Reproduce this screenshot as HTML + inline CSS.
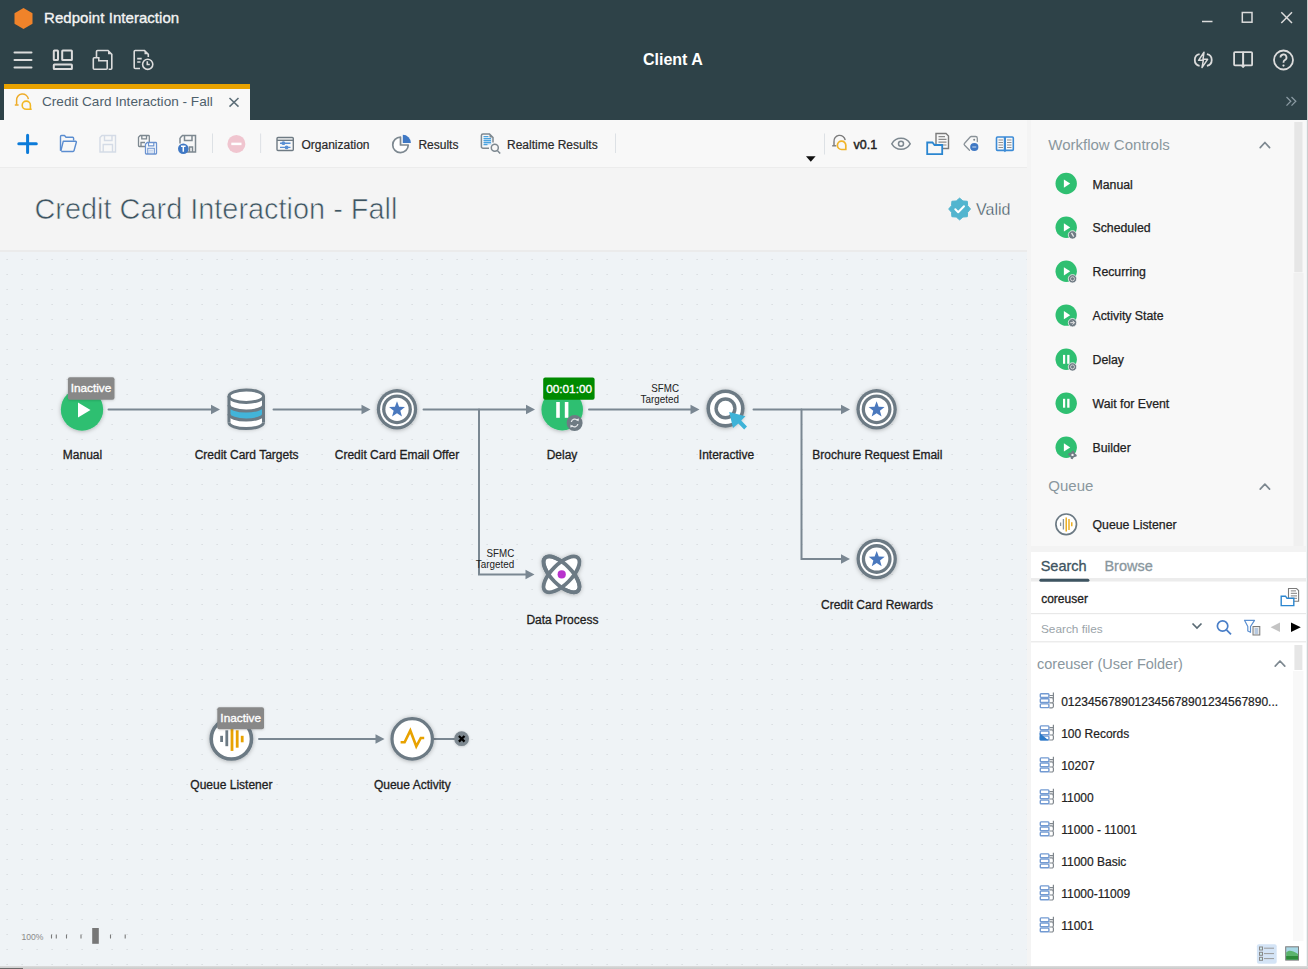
<!DOCTYPE html>
<html><head><meta charset="utf-8">
<style>
*{box-sizing:border-box;margin:0;padding:0}
html,body{width:1308px;height:969px;overflow:hidden;background:#eff3f6;font-family:"Liberation Sans",sans-serif}
.a{position:absolute}
.t{position:absolute;white-space:nowrap;line-height:1}
#hdr{left:0;top:0;width:1308px;height:120px;background:#2e4248}
#tab{left:4px;top:84px;width:246px;height:36px;background:#f8f8f8;border-top:5px solid #e8a200}
#tb{left:0;top:120px;width:1027px;height:48px;background:#f8f8f8;border-bottom:1px solid #ececec}
#ttl{left:0;top:168px;width:1027px;height:84px;background:#f4f4f4;border-bottom:2px solid #ebebeb}
#cv{left:0;top:252px;width:1027px;height:714px;background-color:#eff3f6}
#split{left:1027px;top:120px;width:4px;height:849px;background:#f4f4f4}
#rp{left:1031px;top:120px;width:275px;height:432px;background:#f8f8f8}
#rp2{left:1031px;top:552px;width:275px;height:414px;background:#fff}
#rborder{left:1306.6px;top:0;width:1.4px;height:969px;background:#cdcdcd}
#bborder{left:0;top:966px;width:1308px;height:3px;background:linear-gradient(#dcdcdc,#c8c8c8)}
#bthumb{left:0;top:968px;width:23.4px;height:1px;background:#6a6a6a}
</style></head>
<body>
<div id="hdr" class="a"></div>
<div id="tab" class="a"></div>
<div id="tb" class="a"></div>
<div id="ttl" class="a"></div>
<div id="cv" class="a"></div>

<!-- CANVAS -->
<svg class="a" style="left:0;top:0" width="1027" height="966">
 <defs>
  <pattern id="dots" x="0" y="0" width="15" height="15" patternUnits="userSpaceOnUse">
   <rect x="6.5" y="4" width="1.2" height="1" fill="#d2d7db"/>
  </pattern>
  <filter id="sh" x="-30%" y="-30%" width="160%" height="160%">
   <feDropShadow dx="0" dy="0.6" stdDeviation="2.3" flood-color="#000" flood-opacity="0.3"/>
  </filter>
  <filter id="sh2" x="-30%" y="-30%" width="160%" height="160%">
   <feDropShadow dx="0" dy="0.5" stdDeviation="1.2" flood-color="#000" flood-opacity="0.2"/>
  </filter>
 </defs>
 <rect x="0" y="252" width="1027" height="714" fill="url(#dots)"/>

 <!-- connectors -->
 <g stroke="#7a8792" stroke-width="2" fill="none" stroke-linecap="round">
  <path d="M108.5,409.5H212"/>
  <path d="M273.5,409.5H362"/>
  <path d="M423.5,409.5H527"/>
  <path d="M479,409.5V574.5H526"/>
  <path d="M589,409.5H691"/>
  <path d="M753.5,409.5H842"/>
  <path d="M801.5,409.5V559H842"/>
  <path d="M259,739H376"/>
  <path d="M434,739H455"/>
 </g>
 <path d="M211,404.8L220,409.5L211,414.2Z" fill="#7a8792"/><path d="M361.5,404.8L370.5,409.5L361.5,414.2Z" fill="#7a8792"/><path d="M526,404.8L535,409.5L526,414.2Z" fill="#7a8792"/><path d="M525.5,569.8L534.5,574.5L525.5,579.2Z" fill="#7a8792"/><path d="M690.5,404.8L699.5,409.5L690.5,414.2Z" fill="#7a8792"/><path d="M841,404.8L850,409.5L841,414.2Z" fill="#7a8792"/><path d="M841,554.3L850,559L841,563.7Z" fill="#7a8792"/><path d="M375.5,734.3L384.5,739L375.5,743.7Z" fill="#7a8792"/>
 <!-- Manual -->
 <g filter="url(#sh)"><circle cx="82" cy="409.5" r="21.2" fill="#2fbf71"/></g>
 <path d="M78,402.5V417.5L90.5,410Z" fill="#fff"/>
 <!-- Database -->
 <g filter="url(#sh)">
  <path d="M229,396A17.25,6.4 0 0 1 263.5,396V422.5A17.25,6.3 0 0 1 229,422.5Z" fill="#fff"/>
 </g>
 <path d="M229,405A17.25,6 0 0 0 263.5,405V414A17.25,6 0 0 1 229,414Z" fill="#42b4d9"/>
 <g stroke="#6c7a84" stroke-width="3" fill="none">
  <ellipse cx="246.25" cy="396.2" rx="17.25" ry="6.2"/>
  <path d="M229,396V422.5M263.5,396V422.5"/>
  <path d="M229,405A17.25,6 0 0 0 263.5,405"/>
  <path d="M229,414A17.25,6 0 0 0 263.5,414"/>
  <path d="M229,422.5A17.25,6.1 0 0 0 263.5,422.5"/>
 </g>
 <!-- Email offer -->
 <g filter="url(#sh)"><circle cx="397" cy="409.3" r="20.2" fill="#6c7a84"/></g>
 <circle cx="397" cy="409.3" r="16.9" fill="#fff"/>
 <circle cx="397" cy="409.3" r="14.9" fill="#6c7a84"/>
 <circle cx="397" cy="409.3" r="11.6" fill="#fff"/>
 <path d="M397.00,401.30L399.06,406.87L404.99,407.10L400.33,410.78L401.94,416.50L397.00,413.20L392.06,416.50L393.67,410.78L389.01,407.10L394.94,406.87Z" fill="#4a78bd"/>
 <!-- Delay -->
 <g filter="url(#sh)"><circle cx="562.2" cy="409.6" r="20.8" fill="#2fbf71"/></g>
 <rect x="556.2" y="402" width="3.6" height="15.8" fill="#fff"/>
 <rect x="564.8" y="402" width="3.6" height="15.8" fill="#fff"/>
 <circle cx="574.6" cy="423" r="8" fill="#6f7b84" stroke="#eff3f6" stroke-width="0"/>
 <g fill="none" stroke="#e6e9ec" stroke-width="1.3">
  <path d="M571.3,422A3.5,3.5 0 0 1 577.6,420.6"/>
  <path d="M577.9,424A3.5,3.5 0 0 1 571.6,425.4"/>
 </g>
 <path d="M576.2,419.2L578.6,421.6L578.9,418.6Z M573,426.8L570.6,424.4L570.3,427.4Z" fill="#e6e9ec"/>
 <rect x="543.2" y="377.6" width="51.4" height="22.2" rx="2" fill="#008a00"/>
 <text x="569.1" y="392.5" font-family="Liberation Sans" font-size="11.8" fill="#fff" stroke="#fff" stroke-width="0.35" text-anchor="middle">00:01:00</text>
 <!-- Interactive -->
 <g filter="url(#sh)"><circle cx="725.5" cy="408.6" r="19.1" fill="#6c7a84"/></g>
 <circle cx="725.5" cy="408.6" r="15.5" fill="#fff"/>
 <circle cx="725.5" cy="408.4" r="11.1" fill="#6c7a84"/>
 <circle cx="725.5" cy="408.4" r="7.7" fill="#fff"/>
 <path d="M729.2,412.1L745.4,416.2L741.2,420.6L747,426.6L744.2,429.4L738.3,423.5L733,428.1Z" fill="#3fb3d8"/>
 <!-- Brochure -->
 <g filter="url(#sh)"><circle cx="876.6" cy="409.3" r="20.2" fill="#6c7a84"/></g>
 <circle cx="876.6" cy="409.3" r="16.9" fill="#fff"/>
 <circle cx="876.6" cy="409.3" r="14.9" fill="#6c7a84"/>
 <circle cx="876.6" cy="409.3" r="11.6" fill="#fff"/>
 <path d="M876.60,401.30L878.66,406.87L884.59,407.10L879.93,410.78L881.54,416.50L876.60,413.20L871.66,416.50L873.27,410.78L868.61,407.10L874.54,406.87Z" fill="#4a78bd"/>
 <!-- Rewards -->
 <g filter="url(#sh)"><circle cx="876.7" cy="559" r="20.2" fill="#6c7a84"/></g>
 <circle cx="876.7" cy="559" r="16.9" fill="#fff"/>
 <circle cx="876.7" cy="559" r="14.9" fill="#6c7a84"/>
 <circle cx="876.7" cy="559" r="11.6" fill="#fff"/>
 <path d="M876.70,551.00L878.76,556.57L884.69,556.80L880.03,560.48L881.64,566.20L876.70,562.90L871.76,566.20L873.37,560.48L868.71,556.80L874.64,556.57Z" fill="#4a78bd"/>
 <!-- Data process -->
 <g filter="url(#sh)">
  <g fill="#fff" stroke="#6c7a84" stroke-width="3.8">
   <ellipse cx="561.5" cy="574.4" rx="23.3" ry="10" transform="rotate(45 561.5 574.4)"/>
   <ellipse cx="561.5" cy="574.4" rx="23.3" ry="10" transform="rotate(-45 561.5 574.4)"/>
  </g>
 </g>
 <ellipse cx="561.5" cy="574.4" rx="23.3" ry="10" transform="rotate(45 561.5 574.4)" fill="none" stroke="#6c7a84" stroke-width="3.8"/>
 <circle cx="561.7" cy="574.4" r="4.1" fill="#b833cc"/>
 <!-- Queue listener -->
 <g filter="url(#sh)"><circle cx="231.35" cy="738.9" r="20.15" fill="#fff" stroke="#6c7a84" stroke-width="3.6"/></g>
 <g stroke-width="2.8">
  <path d="M221.6,735.8V742" stroke="#6c7a84"/>
  <path d="M226.8,730.3V746.2" stroke="#6c7a84"/>
  <path d="M232,728V750.9" stroke="#e8a200"/>
  <path d="M237.2,730.3V747.7" stroke="#e8a200"/>
  <path d="M242.2,735.8V742.3" stroke="#e8a200"/>
 </g>
 <!-- Queue activity -->
 <g filter="url(#sh)"><circle cx="412.2" cy="738.9" r="20.2" fill="#fff" stroke="#6c7a84" stroke-width="3.2"/></g>
 <path d="M400.6,742.3H404.6L410.3,730.6L416.3,746.3L420.8,738H424.2" fill="none" stroke="#e8a200" stroke-width="2.6" stroke-linejoin="miter" stroke-linecap="butt"/>
 <g filter="url(#sh2)"><circle cx="461.6" cy="738.7" r="7.4" fill="#7d8890"/></g>
 <path d="M458.9,736L464.5,741.6M464.5,736L458.9,741.6" stroke="#000" stroke-width="2.3"/>
 <!-- inactive labels -->
 <g filter="url(#sh2)"><rect x="67.9" y="377.3" width="46.6" height="22.4" rx="2" fill="#888"/></g>
 <text x="91" y="392.3" font-family="Liberation Sans" font-size="11.8" fill="#fff" stroke="#fff" stroke-width="0.35" text-anchor="middle">Inactive</text>
 <g filter="url(#sh2)"><rect x="217.3" y="707.2" width="46.7" height="22.1" rx="2" fill="#888"/></g>
 <text x="240.7" y="722" font-family="Liberation Sans" font-size="11.8" fill="#fff" stroke="#fff" stroke-width="0.35" text-anchor="middle">Inactive</text>
 <!-- edge labels -->
 <g font-family="Liberation Sans" font-size="10.6" fill="#222">
  <text x="651.3" y="391.8" textLength="27.7" lengthAdjust="spacingAndGlyphs">SFMC</text><text x="640.5" y="403" textLength="38.5" lengthAdjust="spacingAndGlyphs">Targeted</text>
  <text x="486.6" y="556.8" textLength="27.7" lengthAdjust="spacingAndGlyphs">SFMC</text><text x="475.8" y="568" textLength="38.5" lengthAdjust="spacingAndGlyphs">Targeted</text>
 </g>
 <!-- node labels -->
 <g font-family="Liberation Sans" font-size="12" fill="#1e1e1e" stroke="#1e1e1e" stroke-width="0.3" text-anchor="middle">
  <text x="82.5" y="458.8">Manual</text>
  <text x="246.6" y="458.8">Credit Card Targets</text>
  <text x="397" y="458.8">Credit Card Email Offer</text>
  <text x="562" y="458.8">Delay</text>
  <text x="726.5" y="458.8">Interactive</text>
  <text x="877.4" y="458.8">Brochure Request Email</text>
  <text x="562.4" y="623.8">Data Process</text>
  <text x="877" y="608.8">Credit Card Rewards</text>
  <text x="231.4" y="788.8">Queue Listener</text>
  <text x="412.3" y="788.8">Queue Activity</text>
 </g>
 <!-- zoom control -->
 <text x="21.4" y="940" font-family="Liberation Sans" font-size="8.6" fill="#8a8a8a">100%</text>
 <g stroke="#7a7a7a" stroke-width="1.1">
  <path d="M51.5,934.5V938.5M56.3,934.5V938.5M66.5,934.5V938.5M81,934.5V938.5M110.5,934.5V938.5M125.2,934.5V938.5"/>
 </g>
 <rect x="92.2" y="928" width="6.6" height="15.8" fill="#777"/>
</svg>
<div id="split" class="a"></div>
<div id="rp" class="a"></div>
<div id="rp2" class="a"></div>
<div id="rborder" class="a"></div>
<!-- RIGHT PANEL -->
<svg class="a" style="left:0;top:0" width="1308" height="969">
 <circle cx="1066.2" cy="183.5" r="10.7" fill="#2fbf71"/><path d="M1063.9,179.5V187.7L1070.2,183.6Z" fill="#fff"/>
 <circle cx="1066.2" cy="227.3" r="10.7" fill="#2fbf71"/><path d="M1063.9,223.3V231.5L1070.2,227.4Z" fill="#fff"/><circle cx="1072.5" cy="234.9" r="4.2" fill="#6f7b84" stroke="#f8f8f8" stroke-width="0.8"/><path d="M1071.5,232.9L1073.7,236.70000000000002" stroke="#e8e8e8" stroke-width="1.3"/>
 <circle cx="1066.2" cy="271.2" r="10.7" fill="#2fbf71"/><path d="M1063.9,267.2V275.4L1070.2,271.3Z" fill="#fff"/><circle cx="1072.5" cy="278.8" r="4.2" fill="#6f7b84" stroke="#f8f8f8" stroke-width="0.8"/><circle cx="1072.5" cy="278.8" r="2" fill="none" stroke="#d8d8d8" stroke-width="0.9"/>
 <circle cx="1066.2" cy="315.1" r="10.7" fill="#2fbf71"/><path d="M1063.9,311.1V319.3L1070.2,315.20000000000005Z" fill="#fff"/><circle cx="1072.5" cy="322.70000000000005" r="4.2" fill="#6f7b84" stroke="#f8f8f8" stroke-width="0.8"/><path d="M1070.3,322.70000000000005H1074.5M1072.5,320.70000000000005L1074.5,322.70000000000005L1072.5,324.70000000000005" fill="none" stroke="#e8e8e8" stroke-width="1"/>
 <circle cx="1066.2" cy="359.3" r="10.7" fill="#2fbf71"/><rect x="1063.0" y="354.9" width="2.2" height="8.9" fill="#fff"/><rect x="1067.2" y="354.9" width="2.3" height="8.9" fill="#fff"/><circle cx="1072.5" cy="366.90000000000003" r="4.2" fill="#6f7b84" stroke="#f8f8f8" stroke-width="0.8"/><circle cx="1072.5" cy="366.90000000000003" r="2" fill="none" stroke="#d8d8d8" stroke-width="0.9"/>
 <circle cx="1066.2" cy="403.2" r="10.7" fill="#2fbf71"/><rect x="1063.0" y="398.8" width="2.2" height="8.9" fill="#fff"/><rect x="1067.2" y="398.8" width="2.3" height="8.9" fill="#fff"/>
 <circle cx="1066.2" cy="447.3" r="10.7" fill="#2fbf71"/><path d="M1063.9,443.3V451.5L1070.2,447.40000000000003Z" fill="#fff"/><path d="M1076.80,454.90L1076.47,456.55L1074.55,456.95L1073.61,457.58L1072.50,459.20L1070.85,458.87L1070.45,456.95L1069.82,456.01L1068.20,454.90L1068.53,453.25L1070.45,452.85L1071.39,452.22L1072.50,450.60L1074.15,450.93L1074.55,452.85L1075.18,453.79Z" fill="#6f7b84"/><circle cx="1072.5" cy="454.90000000000003" r="1.2" fill="#f0f0f0"/>

 <g fill="none" stroke="#7d8890" stroke-width="1.7" stroke-linecap="round" stroke-linejoin="round">
  <path d="M1260.2,147.6L1264.9,142.5L1269.6,147.6"/>
  <path d="M1260.2,489.2L1264.9,484.1L1269.6,489.2"/>
  <path d="M1275.2,666.2L1280,661L1284.8,666.2"/>
 </g>
 <rect x="1294.3" y="122" width="8.2" height="150.2" fill="#e6e6e6"/>
 <rect x="1293.5" y="273" width="10" height="273" fill="#f0f0f0"/>
 <rect x="1031" y="546" width="275" height="6" fill="#f3f3f3"/>
 <!-- queue listener small -->
 <circle cx="1066.2" cy="524.3" r="10.3" fill="#fff" stroke="#6c7a84" stroke-width="1.7"/>
 <g stroke-width="1.3">
  <path d="M1060.6,522.5V526" stroke="#8a959d"/><path d="M1063.4,519V529.5" stroke="#8a959d"/>
  <path d="M1066.2,517.5V531.5" stroke="#e8a200"/><path d="M1069,519V530" stroke="#e8a200"/><path d="M1071.8,522.3V526.3" stroke="#e8a200"/>
 </g>
 <!-- search tabs -->
 <rect x="1031" y="578" width="275" height="3.5" fill="#ececec"/>
 <rect x="1039.4" y="578.8" width="50" height="3" rx="1.5" fill="#3e5461"/>
 <rect x="1031" y="613" width="275" height="1.2" fill="#e8e8e8"/>
 <rect x="1031" y="641.2" width="275" height="1.2" fill="#e8e8e8"/>
 <!-- folder doc icon -->
 <g fill="none" stroke="#7b7b7b" stroke-width="1.1">
  <path d="M1288.5,599V588.5H1296.5L1298.6,590.6V601.2H1294"/>
 </g>
 <path d="M1290.8,590.9H1296M1290.8,593.4H1297M1290.8,595.9H1297M1290.8,598.4H1297" stroke="#999" stroke-width="1.1"/>
 <path d="M1281.2,605.6V596.2H1285.5L1287,598.2H1293.8V605.6Z" fill="#fff" stroke="#2b86d0" stroke-width="1.4"/>
 <!-- search row icons -->
 <path d="M1192.5,623.5L1197,628L1201.5,623.5" fill="none" stroke="#5a6b75" stroke-width="1.7"/>
 <g fill="none" stroke="#4a7fc8" stroke-width="1.7">
  <circle cx="1222.6" cy="626" r="5.2"/>
  <path d="M1226.5,629.8L1231,634.3"/>
 </g>
 <path d="M1244.5,620.3H1254.5L1250.5,626.5V632.3L1247.8,631V626.5Z" fill="none" stroke="#5b8fd0" stroke-width="1.2" stroke-linejoin="round"/>
 <rect x="1253" y="626.5" width="6.8" height="8.5" fill="#e8e8e8" stroke="#7b7b7b" stroke-width="1"/>
 <path d="M1254.8,629H1258M1254.8,631H1258M1254.8,633H1258" stroke="#5b8fd0" stroke-width="0.7"/>
 <path d="M1280,622.5V632L1270.6,627.2Z" fill="#c4c4c4"/>
 <path d="M1291,622.5V632L1300.8,627.2Z" fill="#000"/>
 <!-- list scrollbar -->
 <rect x="1294.4" y="645" width="8" height="25" fill="#e6e6e6"/>
 <rect x="1293" y="671" width="10.4" height="270" fill="#f8f8f8"/>
 <!-- bottom buttons -->
 <rect x="1256.9" y="944.2" width="19.8" height="19.5" rx="2" fill="#d4e4f6"/>
 <g fill="#cfe8ee" stroke="#888" stroke-width="1">
  <rect x="1259.5" y="947" width="3" height="3"/><rect x="1259.5" y="952.3" width="3" height="3"/><rect x="1259.5" y="957.3" width="3" height="3"/>
 </g>
 <path d="M1264,948.2H1274M1264,953.6H1274M1264,958.6H1274" stroke="#9a9a9a" stroke-width="1"/>
 <rect x="1285.7" y="946.8" width="12.8" height="13.3" fill="#a8d8e6" stroke="#7b7b7b" stroke-width="1"/>
 <path d="M1286.2,952.5C1289,949.6 1292,950.5 1298,954V959.6H1286.2Z" fill="#5cb46d"/>
 <rect x="1286.2" y="956" width="11.8" height="3.6" fill="#2e8b3a"/>
 <path d="M1049.3,695.5H1053.4M1053.4,692.5V699.9" fill="none" stroke="#80878d" stroke-width="1.2"/>
 <path d="M1049.3,697.6H1051.9A1.5,1.5 0 0 1 1053.4,699.1V701.3A1.5,1.5 0 0 1 1051.9,702.8H1049.3M1051.9,702.8A1.5,1.5 0 0 1 1053.4,704.3V706.3A1.5,1.5 0 0 1 1051.9,707.8H1049.3" fill="none" stroke="#80878d" stroke-width="1.2"/>
 <rect x="1040.3" y="693.7" width="8.6" height="3.7" rx="0.8" fill="#fff" stroke="#729ad2" stroke-width="1.4"/>
 <rect x="1040.3" y="698.8" width="8.6" height="3.7" rx="0.8" fill="#fff" stroke="#729ad2" stroke-width="1.4"/>
 <rect x="1040.3" y="703.9" width="8.6" height="3.7" rx="0.8" fill="#fff" stroke="#729ad2" stroke-width="1.4"/>
 <path d="M1049.3,727.7H1053.4M1053.4,724.7V732.1" fill="none" stroke="#80878d" stroke-width="1.2"/>
 <path d="M1049.3,729.8H1051.9A1.5,1.5 0 0 1 1053.4,731.3V733.5A1.5,1.5 0 0 1 1051.9,735.0H1049.3M1051.9,735.0A1.5,1.5 0 0 1 1053.4,736.5V738.5A1.5,1.5 0 0 1 1051.9,740.0H1049.3" fill="none" stroke="#80878d" stroke-width="1.2"/>
 <rect x="1040.3" y="725.9" width="8.6" height="3.7" rx="0.8" fill="#fff" stroke="#729ad2" stroke-width="1.4"/>
 <rect x="1040.3" y="731.0" width="8.6" height="3.7" rx="0.8" fill="#fff" stroke="#729ad2" stroke-width="1.4"/>
 <rect x="1040.3" y="736.1" width="8.6" height="3.7" rx="0.8" fill="#fff" stroke="#729ad2" stroke-width="1.4"/>
 <path d="M1039.6,732.9L1048.7,740.4H1040.8A1.2,1.2 0 0 1 1039.6,739.2Z" fill="#2b7ac9"/>
 <path d="M1049.3,759.7H1053.4M1053.4,756.7V764.1" fill="none" stroke="#80878d" stroke-width="1.2"/>
 <path d="M1049.3,761.8H1051.9A1.5,1.5 0 0 1 1053.4,763.3V765.5A1.5,1.5 0 0 1 1051.9,767.0H1049.3M1051.9,767.0A1.5,1.5 0 0 1 1053.4,768.5V770.5A1.5,1.5 0 0 1 1051.9,772.0H1049.3" fill="none" stroke="#80878d" stroke-width="1.2"/>
 <rect x="1040.3" y="757.9" width="8.6" height="3.7" rx="0.8" fill="#fff" stroke="#729ad2" stroke-width="1.4"/>
 <rect x="1040.3" y="763.0" width="8.6" height="3.7" rx="0.8" fill="#fff" stroke="#729ad2" stroke-width="1.4"/>
 <rect x="1040.3" y="768.1" width="8.6" height="3.7" rx="0.8" fill="#fff" stroke="#729ad2" stroke-width="1.4"/>
 <path d="M1049.3,791.7H1053.4M1053.4,788.7V796.1" fill="none" stroke="#80878d" stroke-width="1.2"/>
 <path d="M1049.3,793.8H1051.9A1.5,1.5 0 0 1 1053.4,795.3V797.5A1.5,1.5 0 0 1 1051.9,799.0H1049.3M1051.9,799.0A1.5,1.5 0 0 1 1053.4,800.5V802.5A1.5,1.5 0 0 1 1051.9,804.0H1049.3" fill="none" stroke="#80878d" stroke-width="1.2"/>
 <rect x="1040.3" y="789.9" width="8.6" height="3.7" rx="0.8" fill="#fff" stroke="#729ad2" stroke-width="1.4"/>
 <rect x="1040.3" y="795.0" width="8.6" height="3.7" rx="0.8" fill="#fff" stroke="#729ad2" stroke-width="1.4"/>
 <rect x="1040.3" y="800.1" width="8.6" height="3.7" rx="0.8" fill="#fff" stroke="#729ad2" stroke-width="1.4"/>
 <path d="M1049.3,823.7H1053.4M1053.4,820.7V828.1" fill="none" stroke="#80878d" stroke-width="1.2"/>
 <path d="M1049.3,825.8H1051.9A1.5,1.5 0 0 1 1053.4,827.3V829.5A1.5,1.5 0 0 1 1051.9,831.0H1049.3M1051.9,831.0A1.5,1.5 0 0 1 1053.4,832.5V834.5A1.5,1.5 0 0 1 1051.9,836.0H1049.3" fill="none" stroke="#80878d" stroke-width="1.2"/>
 <rect x="1040.3" y="821.9" width="8.6" height="3.7" rx="0.8" fill="#fff" stroke="#729ad2" stroke-width="1.4"/>
 <rect x="1040.3" y="827.0" width="8.6" height="3.7" rx="0.8" fill="#fff" stroke="#729ad2" stroke-width="1.4"/>
 <rect x="1040.3" y="832.1" width="8.6" height="3.7" rx="0.8" fill="#fff" stroke="#729ad2" stroke-width="1.4"/>
 <path d="M1049.3,855.7H1053.4M1053.4,852.7V860.1" fill="none" stroke="#80878d" stroke-width="1.2"/>
 <path d="M1049.3,857.8H1051.9A1.5,1.5 0 0 1 1053.4,859.3V861.5A1.5,1.5 0 0 1 1051.9,863.0H1049.3M1051.9,863.0A1.5,1.5 0 0 1 1053.4,864.5V866.5A1.5,1.5 0 0 1 1051.9,868.0H1049.3" fill="none" stroke="#80878d" stroke-width="1.2"/>
 <rect x="1040.3" y="853.9" width="8.6" height="3.7" rx="0.8" fill="#fff" stroke="#729ad2" stroke-width="1.4"/>
 <rect x="1040.3" y="859.0" width="8.6" height="3.7" rx="0.8" fill="#fff" stroke="#729ad2" stroke-width="1.4"/>
 <rect x="1040.3" y="864.1" width="8.6" height="3.7" rx="0.8" fill="#fff" stroke="#729ad2" stroke-width="1.4"/>
 <path d="M1049.3,887.7H1053.4M1053.4,884.7V892.1" fill="none" stroke="#80878d" stroke-width="1.2"/>
 <path d="M1049.3,889.8H1051.9A1.5,1.5 0 0 1 1053.4,891.3V893.5A1.5,1.5 0 0 1 1051.9,895.0H1049.3M1051.9,895.0A1.5,1.5 0 0 1 1053.4,896.5V898.5A1.5,1.5 0 0 1 1051.9,900.0H1049.3" fill="none" stroke="#80878d" stroke-width="1.2"/>
 <rect x="1040.3" y="885.9" width="8.6" height="3.7" rx="0.8" fill="#fff" stroke="#729ad2" stroke-width="1.4"/>
 <rect x="1040.3" y="891.0" width="8.6" height="3.7" rx="0.8" fill="#fff" stroke="#729ad2" stroke-width="1.4"/>
 <rect x="1040.3" y="896.1" width="8.6" height="3.7" rx="0.8" fill="#fff" stroke="#729ad2" stroke-width="1.4"/>
 <path d="M1049.3,919.7H1053.4M1053.4,916.7V924.1" fill="none" stroke="#80878d" stroke-width="1.2"/>
 <path d="M1049.3,921.8H1051.9A1.5,1.5 0 0 1 1053.4,923.3V925.5A1.5,1.5 0 0 1 1051.9,927.0H1049.3M1051.9,927.0A1.5,1.5 0 0 1 1053.4,928.5V930.5A1.5,1.5 0 0 1 1051.9,932.0H1049.3" fill="none" stroke="#80878d" stroke-width="1.2"/>
 <rect x="1040.3" y="917.9" width="8.6" height="3.7" rx="0.8" fill="#fff" stroke="#729ad2" stroke-width="1.4"/>
 <rect x="1040.3" y="923.0" width="8.6" height="3.7" rx="0.8" fill="#fff" stroke="#729ad2" stroke-width="1.4"/>
 <rect x="1040.3" y="928.1" width="8.6" height="3.7" rx="0.8" fill="#fff" stroke="#729ad2" stroke-width="1.4"/>
</svg>

<div class="t" style="left:1048.3px;top:136.5px;font-size:15px;color:#8a979e">Workflow Controls</div>
<div class="t" style="left:1092.5px;top:178.6px;font-size:12.3px;color:#222;-webkit-text-stroke:0.25px #222">Manual</div>
<div class="t" style="left:1092.5px;top:222.4px;font-size:12.3px;color:#222;-webkit-text-stroke:0.25px #222">Scheduled</div>
<div class="t" style="left:1092.5px;top:266.3px;font-size:12.3px;color:#222;-webkit-text-stroke:0.25px #222">Recurring</div>
<div class="t" style="left:1092.5px;top:310.2px;font-size:12.3px;color:#222;-webkit-text-stroke:0.25px #222">Activity State</div>
<div class="t" style="left:1092.5px;top:354.4px;font-size:12.3px;color:#222;-webkit-text-stroke:0.25px #222">Delay</div>
<div class="t" style="left:1092.5px;top:398.3px;font-size:12.3px;color:#222;-webkit-text-stroke:0.25px #222">Wait for Event</div>
<div class="t" style="left:1092.5px;top:442.4px;font-size:12.3px;color:#222;-webkit-text-stroke:0.25px #222">Builder</div>
<div class="t" style="left:1048.3px;top:478.2px;font-size:15px;color:#8a979e">Queue</div>
<div class="t" style="left:1092.5px;top:519.4px;font-size:12.3px;color:#222;-webkit-text-stroke:0.25px #222">Queue Listener</div>
<div class="t" style="left:1040.7px;top:559px;font-size:14.5px;color:#3e5461;-webkit-text-stroke:0.3px #3e5461">Search</div>
<div class="t" style="left:1104.4px;top:559px;font-size:14.5px;color:#8a979e;-webkit-text-stroke:0.3px #8a979e">Browse</div>
<div class="t" style="left:1041.2px;top:592.5px;font-size:12px;color:#222;-webkit-text-stroke:0.3px #222">coreuser</div>
<div class="t" style="left:1041px;top:624px;font-size:11.8px;color:#9aa3a9">Search files</div>
<div class="t" style="left:1037px;top:657.3px;font-size:14.5px;color:#8a979e">coreuser (User Folder)</div>
<div class="t" style="left:1061.2px;top:695.7px;font-size:12px;color:#222;-webkit-text-stroke:0.2px #222">0123456789012345678901234567890...</div>
<div class="t" style="left:1061.2px;top:727.7px;font-size:12px;color:#222;-webkit-text-stroke:0.2px #222">100 Records</div>
<div class="t" style="left:1061.2px;top:759.7px;font-size:12px;color:#222;-webkit-text-stroke:0.2px #222">10207</div>
<div class="t" style="left:1061.2px;top:791.7px;font-size:12px;color:#222;-webkit-text-stroke:0.2px #222">11000</div>
<div class="t" style="left:1061.2px;top:823.7px;font-size:12px;color:#222;-webkit-text-stroke:0.2px #222">11000 - 11001</div>
<div class="t" style="left:1061.2px;top:855.7px;font-size:12px;color:#222;-webkit-text-stroke:0.2px #222">11000 Basic</div>
<div class="t" style="left:1061.2px;top:887.7px;font-size:12px;color:#222;-webkit-text-stroke:0.2px #222">11000-11009</div>
<div class="t" style="left:1061.2px;top:919.7px;font-size:12px;color:#222;-webkit-text-stroke:0.2px #222">11001</div>

<!-- HEADER -->
<svg class="a" style="left:0;top:0" width="1308" height="120">
 <polygon points="23.5,8 32.5,13.2 32.5,23.8 23.5,29 14.5,23.8 14.5,13.2" fill="#f0832a"/>
 <g stroke="#dcdcdc" stroke-width="2" fill="none" stroke-linecap="round">
  <path d="M14.5,52.5H31.5M14.5,60H31.5M14.5,67.5H31.5"/>
 </g>
 <g stroke="#dcdcdc" stroke-width="1.6" fill="none">
  <rect x="53.8" y="50.6" width="4.2" height="9.5" rx="0.6" stroke-width="2"/>
  <rect x="62.2" y="50.6" width="9.7" height="9.5" rx="0.6" stroke-width="2"/>
  <rect x="53.8" y="64.6" width="18.1" height="4.5" rx="0.6" stroke-width="2"/>
  <path d="M96.5,57.5V51.5A1,1 0 0 1 97.5,50.5H108L111.8,54.3V68.3A1,1 0 0 1 110.8,69.3H108.6"/>
  <path d="M94.3,57.8H98.8V60.8H107.2V68.3A1,1 0 0 1 106.2,69.3H94.3A1,1 0 0 1 93.3,68.3V58.8A1,1 0 0 1 94.3,57.8Z"/>
  <path d="M140,68.5H135.2A1,1 0 0 1 134.2,67.5V51.5A1,1 0 0 1 135.2,50.5H144.5L148.3,54.3V57"/>
  <path d="M137.2,58.6H141.7M137.2,62H140.5"/>
  <circle cx="147.7" cy="64.3" r="5.1"/>
  <path d="M147.3,61.3V64.5H149.8"/>
 </g>
 <g stroke="#dcdcdc" stroke-width="1.5" fill="none">
  <path d="M1202,21.5H1212.5"/>
  <rect x="1242.3" y="12.5" width="9.7" height="9.7"/>
  <path d="M1281.3,12.3L1292,23M1292,12.3L1281.3,23"/>
 </g>
 <g stroke="#dcdcdc" stroke-width="1.8" fill="none" stroke-linejoin="round">
  <path d="M1199.6,54.2A5.9,5.9 0 0 0 1199.6,65.8M1206.9,54.2A5.9,5.9 0 0 1 1206.9,65.8"/>
  <path d="M1204,52.2L1198.6,60.3H1203.3L1202,67.6L1207.6,59.3H1203Z" stroke-width="1.5"/>
  <path d="M1235,52.1H1243V65.4H1235A1,1 0 0 1 1234.1,64.4V53.1A1,1 0 0 1 1235,52.1Z M1243.2,52.1H1251.1A1,1 0 0 1 1252.1,53.1V64.4A1,1 0 0 1 1251.1,65.4H1243.2Z"/>
  <path d="M1241.6,65.6L1243.1,67.2L1244.6,65.6" stroke-width="1.4"/>
  <circle cx="1283.5" cy="60" r="9.5"/>
  <path d="M1280.5,57.5A3,3 0 1 1 1284.5,60.3C1283.6,60.8 1283.5,61.5 1283.5,62.8"/>
 </g>
 <circle cx="1283.5" cy="65.6" r="1.1" fill="#dcdcdc"/>
 <path d="M108,50.5L111.8,54.3H108Z M144.5,50.5L148.3,54.3H144.5Z" fill="#dcdcdc"/>
 <g stroke="#8a99a2" stroke-width="1.3" fill="none">
  <path d="M1286.5,97L1290.8,101.3L1286.5,105.6M1291.5,97L1295.8,101.3L1291.5,105.6"/>
 </g>
</svg>
<div class="t" style="left:44px;top:10px;font-size:15px;letter-spacing:0.05px;color:#f4f4f4;-webkit-text-stroke:0.35px #f4f4f4">Redpoint Interaction</div>
<div class="t" style="left:643px;top:52px;font-size:16px;font-weight:bold;color:#fff">Client A</div>

<!-- TOOLBAR -->
<svg class="a" style="left:0;top:120px" width="1027" height="47">
 <path d="M27.6,15.2V32.5M18.8,23.8H36.3" stroke="#0c7bd9" stroke-width="3" stroke-linecap="round"/>
 <g fill="none" stroke="#5b8dd0" stroke-width="1.4" stroke-linejoin="round">
  <path d="M60.5,30.8V16.5A1,1 0 0 1 61.5,15.5H64.5L66,17.2H72.6A1,1 0 0 1 73.6,18.2V20.5"/>
  <path d="M60.8,31L63.3,21.2H75.6A0.8,0.8 0 0 1 76.4,22L74,30.7A1,1 0 0 1 73,31.5H61.3"/>
 </g>
 <g fill="none" stroke="#d4dbe6" stroke-width="1.4">
  <path d="M100,17.5L102,15.5H115.5V32H100Z"/>
  <path d="M104.5,15.5V20.5H112V15.5"/>
  <path d="M103.2,32V24.5H112.5V32"/>
 </g>
 <g fill="none" stroke="#7d8890" stroke-width="1.3">
  <path d="M145,26.5H139.3A0.8,0.8 0 0 1 138.5,25.7V17.3L140.3,15.5H148.5A0.8,0.8 0 0 1 149.3,16.3V22"/>
  <path d="M141.8,15.5V18.8H146.5V15.5"/>
  <path d="M141,26.5V22.5H145"/>
 </g>
 <path d="M147.3,22.5H155.7A0.8,0.8 0 0 1 156.5,23.3V33.2A0.8,0.8 0 0 1 155.7,34H146.3A0.8,0.8 0 0 1 145.5,33.2V24.3Z" fill="#fff" stroke="#6b93d0" stroke-width="1.3"/>
 <path d="M148.5,22.5V25.8H153.8V22.5" fill="none" stroke="#6b93d0" stroke-width="1.2"/>
 <path d="M147.8,34V28.3H154.3V34" fill="none" stroke="#6b93d0" stroke-width="1.1"/>
 <path d="M149,30.2H153M149,32H153" stroke="#9db8e0" stroke-width="0.8"/>
 <g fill="none" stroke="#7d8890" stroke-width="1.5">
  <path d="M180,18L182.5,15.5H195.5V32H186.5"/>
  <path d="M180,18V23.5"/>
  <path d="M184.5,15.5V20.5H192V15.5"/>
  <path d="M189.5,32V27H192.5V32"/>
 </g>
 <circle cx="183.3" cy="28.8" r="5.3" fill="#3f78c4"/>
 <path d="M181,26.3H185.6M183.3,26.3V31.8" stroke="#fff" stroke-width="1.5"/>
 <path d="M212.5,13.5V33" stroke="#dde1e5" stroke-width="1"/>
 <circle cx="236.4" cy="23.9" r="9" fill="#f0c5cf"/>
 <path d="M231.3,23.9H241.5" stroke="#fff" stroke-width="2.5"/>
 <path d="M260.6,13.5V33" stroke="#dde1e5" stroke-width="1"/>
 <g fill="none" stroke="#6f7b84" stroke-width="1.4">
  <rect x="277" y="17.5" width="16.3" height="13" rx="1"/>
  <path d="M277,20.3H293.3"/>
 </g>
 <path d="M280,23.2H290.5M280,27.4H290.5" stroke="#5a8fd3" stroke-width="1.4"/>
 <circle cx="283.4" cy="23.2" r="1.9" fill="#5a8fd3"/><circle cx="286.6" cy="27.4" r="1.9" fill="#5a8fd3"/>
 <path d="M400.5,17.2A7.75,7.75 0 1 0 408.25,25H400.5Z" fill="#fff" stroke="#7d8890" stroke-width="1.7" stroke-linejoin="round"/>
 <path d="M402.8,14.8A8.1,8.1 0 0 1 410.9,22.9H402.8Z" fill="#3f78c4"/>
 <path d="M484,24.8H491.5V18H484Z" fill="#cfe3f5"/>
 <path d="M483.5,16.7H488.5M483.5,18.7H491M483.5,20.7H491M483.5,22.7H491M483.5,24.7H487.5" stroke="#4aa3e0" stroke-width="1.3"/>
 <g fill="none" stroke="#7d8890" stroke-width="1.5">
  <path d="M489,28.3H483A1.6,1.6 0 0 1 481.4,26.7V15.6A1.6,1.6 0 0 1 483,14H489.5L493,17.5V22.5"/>
  <circle cx="494.8" cy="27.8" r="3.5"/>
  <path d="M497.3,30.4L500.2,33.4"/>
 </g>
 <path d="M489.5,14L493,17.5H489.5Z" fill="#7d8890"/>
 <path d="M615.5,13.5V33" stroke="#dde1e5" stroke-width="1"/>
 <path d="M806,36.3H815.6L810.8,41.8Z" fill="#111"/>
 <path d="M824.5,13.5V34.5" stroke="#dde1e5" stroke-width="1"/>
 <g fill="none" stroke="#7a7a7a" stroke-width="1.4">
  <path d="M845.2,20.2A5.6,5.6 0 0 0 834,21.8V25.6"/>
  <path d="M832.2,25.8H836.3"/>
 </g>
 <g fill="none" stroke="#f0b429" stroke-width="1.7">
  <path d="M846.6,29.5H841.6A4.2,4.2 0 1 1 845.8,25.3V29.5Z"/>
 </g>
 <g fill="none" stroke="#7d8890" stroke-width="1.5">
  <path d="M891.8,23.8C896,16.5 906,16.5 910.2,23.8C906,31 896,31 891.8,23.8Z"/>
  <circle cx="901" cy="23.8" r="2.5"/>
 </g>
 <g fill="none" stroke="#7b7b7b" stroke-width="1.4">
  <path d="M936,28.5V13.5H946L948.5,16V28.5H943"/>
 </g>
 <path d="M938.5,16.6H945M938.5,19.4H946.5M938.5,22.2H946.5M938.5,25H946.5" stroke="#8b8b8b" stroke-width="1.2"/>
 <path d="M927.2,34.2V22.5H932.5L934.5,25H942.2V34.2Z" fill="#f8f8f8" stroke="#2b86d0" stroke-width="1.8"/>
 <g fill="none" stroke="#8a9298" stroke-width="1.3">
  <path d="M977.3,21.5V18.3A1.8,1.8 0 0 0 975.5,16.5H971.3A1.5,1.5 0 0 0 970.2,17L964.6,23.2A1.5,1.5 0 0 0 964.6,25.3L969.5,30.3" stroke-linecap="round"/>
 </g>
 <circle cx="974.2" cy="19.7" r="1" fill="#7a8288"/>
 <circle cx="974.3" cy="27" r="4.1" fill="#3f78c4"/>
 <path d="M972.3,27H976.3" stroke="#c9d9f0" stroke-width="1"/>
 <g fill="none" stroke="#3c8bd6" stroke-width="1.6">
  <path d="M997.5,17H1004.6V30.4H997.5A1,1 0 0 1 996.5,29.4V18A1,1 0 0 1 997.5,17Z M1005.2,17H1012.3A1,1 0 0 1 1013.3,18V29.4A1,1 0 0 1 1012.3,30.4H1005.2Z"/>
 </g>
 <path d="M998.5,20H1003M998.5,22.5H1003M998.5,25H1003M998.5,27.5H1003M1007,20H1011.5M1007,22.5H1011.5M1007,25H1011.5M1007,27.5H1011.5" stroke="#909090" stroke-width="1"/>
 <path d="M1003.3,30.5H1006.5L1004.9,32.2Z" fill="#3c8bd6"/>
</svg>
<div class="t" style="left:301.5px;top:138.5px;font-size:12px;color:#2a2a2a;-webkit-text-stroke:0.2px #2a2a2a">Organization</div>
<div class="t" style="left:418.4px;top:138.5px;font-size:12px;color:#2a2a2a;-webkit-text-stroke:0.2px #2a2a2a">Results</div>
<div class="t" style="left:507px;top:138.5px;font-size:12px;color:#2a2a2a;-webkit-text-stroke:0.2px #2a2a2a">Realtime Results</div>
<div class="t" style="left:853.6px;top:138.5px;font-size:12.5px;color:#222;-webkit-text-stroke:0.45px #222">v0.1</div>
<!-- TITLE -->
<div class="t" style="left:34.5px;top:195px;font-size:28.9px;color:#3e5461;-webkit-text-stroke:0.6px #f4f4f4">Credit Card Interaction - Fall</div>
<svg class="a" style="left:946px;top:195px" width="28" height="28">
 <path id="badge" fill="#52b5cf" stroke="#52b5cf" stroke-width="1" stroke-linejoin="round" d="M13.60,3.10L16.93,5.96L21.31,6.29L21.64,10.67L24.50,14.00L21.64,17.33L21.31,21.71L16.93,22.04L13.60,24.90L10.27,22.04L5.89,21.71L5.56,17.33L2.70,14.00L5.56,10.67L5.89,6.29L10.27,5.96Z"/>
 <path d="M9.3,14.3L12.2,17.2L18,11.2" fill="none" stroke="#fff" stroke-width="2" stroke-linecap="round" stroke-linejoin="round"/>
</svg>
<div class="t" style="left:976px;top:201.5px;font-size:16px;color:#3e5461;-webkit-text-stroke:0.3px #f4f4f4">Valid</div>

<!-- TAB -->
<svg class="a" style="left:0;top:84px" width="260" height="36">
 <g fill="none" stroke="#eeac2a" stroke-width="1.5">
  <path d="M28.4,15.2A5.8,5.8 0 0 0 16.6,16.6V20.8"/>
  <path d="M14.8,21H18.6"/>
 </g>
 <path d="M31.7,25.3H26.3A4.1,4.1 0 1 1 30.4,21.2V25.3Z" fill="none" stroke="#f2b824" stroke-width="1.6"/>
 <g stroke="#5d6e78" stroke-width="1.5"><path d="M229.5,14L238.5,22.6M238.5,14L229.5,22.6"/></g>
</svg>
<div class="t" style="left:42px;top:95px;font-size:13.6px;color:#4e606b">Credit Card Interaction - Fall</div>

<div id="bborder" class="a"></div><div id="bthumb" class="a"></div>
</body></html>
